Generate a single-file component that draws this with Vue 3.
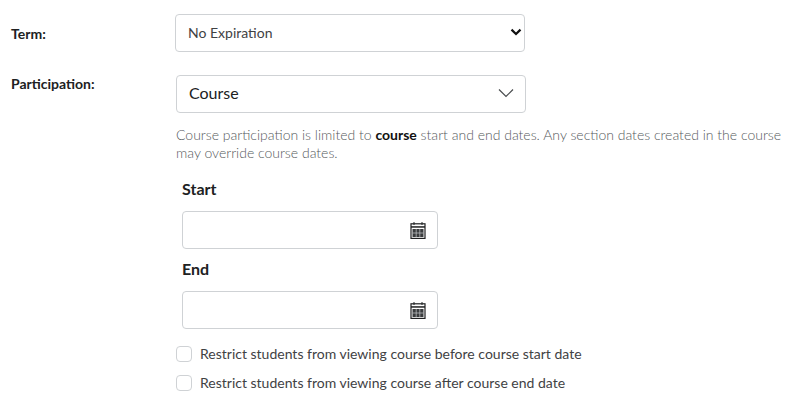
<template>
  <div class="page">
    <div class="row row--term">
      <label class="row__label">Term:</label>
      <div class="select-wrap">
        <select class="select select--term">
          <option>No Expiration</option>
        </select>
        <svg class="select-icon" width="12" height="8" viewBox="0 0 12 8">
          <path d="M1.5 1.6 6 6 10.5 1.6" fill="none" stroke="#111" stroke-width="2.2" />
        </svg>
      </div>
    </div>

    <div class="row row--part">
      <label class="row__label row__label--part">Participation:</label>
      <div class="part">
        <div class="select-wrap">
          <select class="select select--part">
            <option>Course</option>
          </select>
          <svg class="select-icon select-icon--thin" width="16" height="10" viewBox="0 0 16 10">
            <path d="M1 1.5 8 8.5 15 1.5" fill="none" stroke="#494c4e" stroke-width="1.2" />
          </svg>
        </div>
        <p class="help">
          Course participation is limited to <strong>course</strong> start and end dates. Any section dates created in the course may override course dates.
        </p>
        <div class="dates">
          <div v-for="d in dates" :key="d" class="date">
            <label class="date__label">{{ d }}</label>
            <div class="date__box">
              <svg width="16" height="17" viewBox="0 0 16 17">
                <path d="M4 0v3M12 0v3" stroke="#494c4e" stroke-width="1.2" />
                <rect x="1" y="1.8" width="14" height="14.6" fill="none" stroke="#202122" stroke-width="1.2" />
                <rect x="1" y="4.2" width="14" height="1.5" fill="#202122" />
                <path d="M2.5 7h11v8h-11z" fill="#3a3c3e" />
                <path d="M6.2 7v8M9.8 7v8M2.5 11h11" stroke="#c4c6c8" stroke-width=".7" />
              </svg>
            </div>
          </div>
        </div>
        <div class="checks">
          <label v-for="c in checks" :key="c" class="check">
            <input type="checkbox" class="check__box" />
            <span>{{ c }}</span>
          </label>
        </div>
      </div>
    </div>
  </div>
</template>

<script setup>
const dates = ['Start', 'End']
const checks = [
  'Restrict students from viewing course before course start date',
  'Restrict students from viewing course after course end date',
]
</script>

<style>
html, body {
  background: #fff;
}
</style>

<style scoped>
.page {
  width: 800px;
  height: 409px;
  overflow: hidden;
  box-sizing: border-box;
  padding: 14px 11px 0;
  font-family: Lato, sans-serif;
  color: #202122;
  background: #fff;
}

.row {
  display: flex;
}
.row--term {
  margin-bottom: 23px;
}
.row__label {
  width: 164px;
  flex-shrink: 0;
  font-size: 14px;
  font-weight: 700;
  line-height: 18px;
  padding-top: 11px;
}
.row--part .row__label {
  width: 165px;
  padding-top: 0;
}

.select-wrap {
  position: relative;
  width: 350px;
  height: 38px;
}
.select {
  appearance: none;
  display: block;
  width: 100%;
  height: 100%;
  box-sizing: border-box;
  background: #fff;
  border: 1px solid #cfd2d5;
  border-radius: 4px;
  font-family: inherit;
  color: #3f4244;
  outline: none;
}
.select--term {
  padding: 0 0 2px 12px;
  font-size: 14px;
}
.select--part {
  padding: 0 0 4px 12px;
  font-size: 16px;
  color: #202122;
}
.select-icon {
  position: absolute;
  top: 14px;
  right: 3px;
  pointer-events: none;
}
.select-icon--thin {
  top: 13px;
  right: 12px;
}

.part {
  flex: 1;
  min-width: 0;
}
.help {
  margin: 13px 0 0;
  font-size: 14px;
  font-weight: 300;
  line-height: 18px;
  color: #565a5d;
  width: 613px;
}
.help strong {
  color: #111;
  font-weight: 700;
}

.dates {
  margin: 17px 0 0 6px;
  display: flex;
  flex-direction: column;
  gap: 10px;
}
.date__label {
  display: block;
  font-size: 16px;
  font-weight: 700;
  line-height: 20px;
  margin-bottom: 12px;
}
.date__box {
  width: 256px;
  height: 38px;
  box-sizing: border-box;
  border: 1px solid #cfd2d5;
  border-radius: 4px;
  display: flex;
  align-items: center;
  justify-content: flex-end;
  padding-right: 11px;
}

.checks {
  margin-top: 16px;
  display: flex;
  flex-direction: column;
  gap: 11px;
}
.check {
  display: flex;
  align-items: center;
  gap: 8px;
  font-size: 14px;
  line-height: 18px;
  color: #3f4244;
}
.check__box {
  appearance: none;
  margin: 0;
  width: 16px;
  height: 16px;
  box-sizing: border-box;
  border: 1px solid #cfd2d5;
  border-radius: 4px;
  background: #fff;
}
</style>
